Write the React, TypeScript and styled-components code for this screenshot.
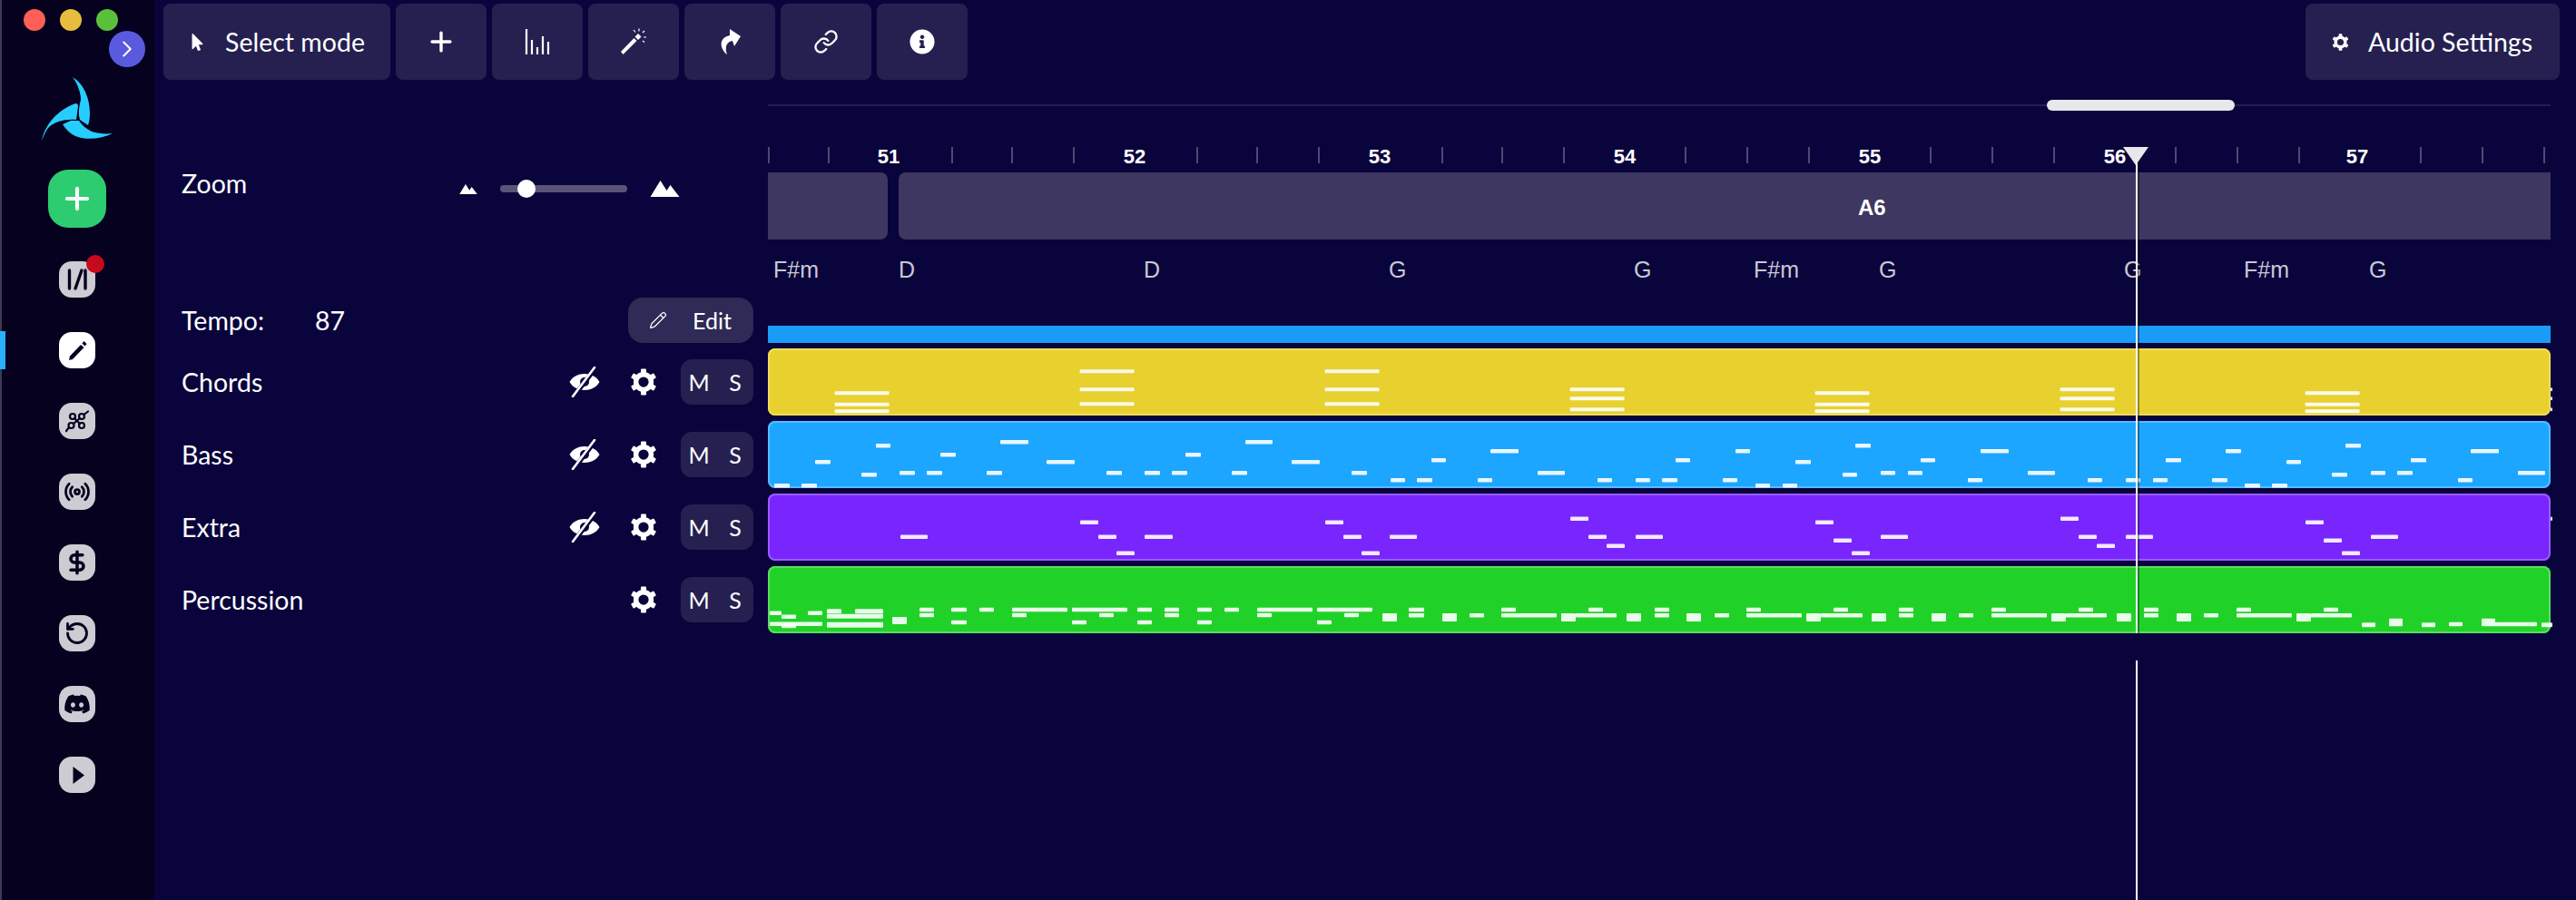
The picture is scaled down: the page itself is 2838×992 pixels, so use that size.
import styled, { createGlobalStyle } from 'styled-components'
import { ChevronRight, DollarSign, Link, Pencil, Plus, Radio, RotateCcw } from 'lucide-react'
import { FaDiscord, FaInfoCircle, FaMousePointer } from 'react-icons/fa'

const TIMELINE_X = 846
const TIMELINE_WIDTH = 1964

// [x start, x end, y centre, height]; page coordinates, height defaults to 4.5
type Note = [number, number, number, number?]

const GlobalStyle = createGlobalStyle`
    html, body {
        margin: 0;
        padding: 0;
        width: 2838px;
        height: 992px;
        overflow: hidden;
        background: #0a043c;
        font-family: 'Lato', 'Liberation Sans', sans-serif;
    }
`

const chordShapes = [
    [433.3, 445.7, 453.3],
    [409.3, 429.3, 445.3],
    [409.3, 429.3, 445.3],
    [429.3, 439.3, 451.3],
    [433.3, 445.7, 453.3],
    [429.3, 439.3, 451.3],
    [433.3, 445.7, 453.3],
]
const chordNotes: Note[] = chordShapes.flatMap((ys, i) =>
    ys.map((y): Note => [919.6 + i * 270, 979.6 + i * 270, y, 4])
)
chordNotes.push([2810, 2812, 429.3, 4], [2810, 2812, 439.3, 4], [2810, 2812, 451.3, 4])

const bassNotes: Note[] = [
    [853, 870, 535.3], [883, 900, 535.3], [898, 915, 509.3], [949, 966, 523.3], [965, 981, 491.3],
    [991, 1008, 521.3], [1021, 1038, 521.3], [1036, 1053, 501.3], [1087, 1104, 521.3], [1102, 1133, 487.3],
    [1153, 1184, 509.3], [1219, 1236, 521.3], [1261, 1278, 521.3], [1291, 1308, 521.3], [1306, 1323, 501.3],
    [1357, 1374, 521.3], [1372, 1402, 487.3], [1423, 1454, 509.3], [1489, 1506, 521.3], [1532, 1548, 529.3],
    [1561, 1578, 529.3], [1577, 1593, 507.3], [1628, 1644, 529.3], [1642, 1673, 497.3], [1694, 1724, 521.3],
    [1760, 1776, 529.3], [1802, 1818, 529.3], [1831, 1848, 529.3], [1846, 1862, 507.3], [1898, 1914, 529.3],
    [1912, 1928, 497.3], [1934, 1950, 535.3], [1964, 1980, 535.3], [1978, 1995, 509.3], [2030, 2046, 523.3],
    [2044, 2061, 491.3], [2072, 2088, 521.3], [2102, 2118, 521.3], [2116, 2132, 507.3], [2168, 2184, 529.3],
    [2182, 2213, 497.3], [2234, 2264, 521.3], [2300, 2316, 529.3], [2342, 2358, 529.3], [2372, 2388, 529.3],
    [2386, 2403, 507.3], [2437, 2454, 529.3], [2452, 2469, 497.3], [2473, 2490, 535.3], [2503, 2520, 535.3],
    [2519, 2535, 509.3], [2569, 2586, 523.3], [2584, 2601, 491.3], [2612, 2628, 521.3], [2641, 2658, 521.3],
    [2656, 2673, 507.3], [2708, 2724, 529.3], [2722, 2753, 497.3], [2774, 2804, 521.3],
]

const extraNotes: Note[] = [
    [992, 1022, 591.7], [1190, 1210, 575.7], [1210, 1230, 591.7], [1230, 1250, 609.7], [1261, 1292, 591.7],
    [1460, 1480, 575.7], [1480, 1500, 591.7], [1500, 1520, 609.7], [1531, 1561, 591.7], [1730, 1750, 571.7],
    [1750, 1770, 591.7], [1770, 1790, 601.7], [1802, 1832, 591.7], [2000, 2020, 575.7], [2020, 2040, 595.7],
    [2040, 2060, 609.7], [2072, 2102, 591.7], [2270, 2290, 571.7], [2290, 2310, 591.7], [2310, 2330, 601.7],
    [2342, 2372, 591.7], [2540, 2560, 575.7], [2560, 2580, 595.7], [2580, 2600, 609.7], [2612, 2642, 591.7],
    [2810, 2812, 571.7],
]

const percussionNotes: Note[] = [
    [848, 861, 675.7], [861, 877, 679.7], [890, 906, 675.7], [848, 906, 687.7], [861, 877, 690],
    [911, 927, 673.7, 5], [942, 973, 673.7, 5], [911, 973, 679.3, 5], [911, 973, 688.7, 6], [983, 999, 684, 8],
    [1013, 1029, 672], [1013, 1029, 678], [1048, 1065, 672], [1048, 1065, 686], [1079, 1095, 672],
    [1115, 1176, 672], [1115, 1131, 678], [1181, 1242, 672], [1211, 1227, 678], [1181, 1197, 686],
    [1253, 1269, 672], [1253, 1269, 686], [1283, 1299, 672], [1283, 1299, 678], [1319, 1335, 672],
    [1319, 1335, 686], [1349, 1365, 672], [1385, 1446, 672], [1385, 1401, 678], [1451, 1512, 672],
    [1481, 1497, 678], [1451, 1467, 686], [1523, 1539, 680.5, 9], [1552, 1569, 672], [1552, 1569, 678.3],
    [1589, 1605, 680.5, 9], [1619, 1635, 678.3], [1654, 1670, 672], [1654, 1715, 678.3], [1720, 1736, 680.5, 9],
    [1736, 1781, 678.3], [1750, 1766, 672], [1792, 1808, 680.5, 9], [1823, 1839, 672], [1823, 1839, 678.3],
    [1858, 1874, 680.5, 9], [1889, 1905, 678.3], [1924, 1940, 672], [1924, 1985, 678.3], [1990, 2006, 680.5, 9],
    [2006, 2052, 678.3], [2020, 2036, 672], [2062, 2078, 680.5, 9], [2092, 2108, 672], [2092, 2108, 678.3],
    [2128, 2144, 680.5, 9], [2158, 2174, 678.3], [2194, 2210, 672], [2194, 2255, 678.3], [2260, 2276, 680.5, 9],
    [2276, 2321, 678.3], [2290, 2306, 672], [2332, 2348, 680.5, 9], [2362, 2378, 672], [2362, 2378, 678.3],
    [2398, 2414, 680.5, 9], [2428, 2444, 678.3], [2464, 2480, 672], [2464, 2525, 678.3], [2530, 2546, 680.5, 9],
    [2546, 2591, 678.3], [2560, 2576, 672], [2602, 2617, 688.7, 5], [2632, 2647, 684], [2632, 2647, 688],
    [2668, 2683, 688.7, 5], [2698, 2713, 688], [2734, 2749, 684], [2734, 2795, 688], [2800, 2812, 688.7, 5],
]

const tracks = [
    { name: 'Chords', hideable: true, top: 384, fill: '#e8d02f', edge: '#f0dc5c', notes: chordNotes },
    { name: 'Bass', hideable: true, top: 464, fill: '#1ca6ff', edge: '#55bbff', notes: bassNotes },
    { name: 'Extra', hideable: true, top: 544, fill: '#7925fe', edge: '#9a5cff', notes: extraNotes },
    { name: 'Percussion', hideable: false, top: 624, fill: '#20d228', edge: '#5cdc62', notes: percussionNotes },
]

const ticks = [
    846, 912, 1048, 1114, 1182, 1318, 1384, 1452, 1588, 1654, 1722, 1856, 1924, 1992, 2126, 2194, 2262, 2396, 2464,
    2532, 2666, 2734, 2802,
]
const bars = [
    { label: 51, x: 979 },
    { label: 52, x: 1250 },
    { label: 53, x: 1520 },
    { label: 54, x: 1790 },
    { label: 55, x: 2060 },
    { label: 56, x: 2330 },
    { label: 57, x: 2597 },
]
const chords = [
    { label: 'F#m', x: 852 },
    { label: 'D', x: 990 },
    { label: 'D', x: 1260 },
    { label: 'G', x: 1530 },
    { label: 'G', x: 1800 },
    { label: 'F#m', x: 1932 },
    { label: 'G', x: 2070 },
    { label: 'G', x: 2340 },
    { label: 'F#m', x: 2472 },
    { label: 'G', x: 2610 },
]

const GearIcon = ({ size }: { size: number }) => (
    <svg width={size} height={size} viewBox="0 0 24 24" fill="#fff">
        <circle cx="12" cy="12" r="6.7" fill="none" stroke="#fff" strokeWidth="4.4" />
        {[0, 60, 120, 180, 240, 300].map((a) => (
            <rect key={a} x="9.6" y="0.4" width="4.8" height="5" rx="0.8" transform={`rotate(${a} 12 12)`} />
        ))}
    </svg>
)

const EyeOffIcon = () => (
    <svg width="34" height="34" viewBox="0 0 34 34">
        <path d="M0.5 17C7 5 27 5 33.5 17C27 29 7 29 0.5 17Z" fill="#fff" />
        <circle cx="17" cy="17" r="5" fill="#0a043c" />
        <path d="M5 33L29 2" stroke="#0a043c" strokeWidth="5" />
        <path d="M4 33L28 1" stroke="#fff" strokeWidth="2.6" strokeLinecap="round" />
    </svg>
)

const MountainIcon = ({ width, height }: { width: number; height: number }) => (
    <svg width={width} height={height} viewBox="0 0 32 18" fill="#fff">
        <path d="M0 18L11 0L18 11L22 5L32 18Z" />
    </svg>
)

const BarsIcon = () => (
    <svg width="28" height="30" viewBox="0 0 28 30" stroke="#fff" strokeWidth="2.2">
        <path d="M2 1V29M8 13V29M14 21V29M20 9V29M26 15V29" />
    </svg>
)

const WandIcon = () => (
    <svg width="30" height="30" viewBox="0 0 30 30" fill="#fff">
        <path d="M1 26L15.5 11L18.5 14L3.5 29Z" />
        <path d="M20 6L23.5 9.5L20 13L16.5 9.5Z" />
        <path d="M21 0.5V3.5M27 3L25 5M29 10H26M27 15.5L25 14M15 2L17 4.5" stroke="#fff" strokeWidth="1.2" />
    </svg>
)

const ShareIcon = () => (
    <svg width="24" height="30" viewBox="0 0 24 28" fill="#fff">
        <path d="M12 0L24 8L17 19L15 13C9 14 6 19 9 28C1 22 -1 10 12 7Z" />
    </svg>
)

const LibraryGlyph = () => (
    <svg width="40" height="40" viewBox="0 0 40 40" fill="none" stroke="#05011f" strokeWidth="3.4" strokeLinecap="round">
        <path d="M11.5 10V30M25 10L18 30M29 10V30" />
    </svg>
)

const PencilGlyph = () => (
    <svg width="40" height="40" viewBox="0 0 40 40" fill="#05011f">
        <path d="M12 26.5L24 14L27.5 17L15 30L11 31Z" />
        <path d="M25.5 12.5L27.5 10L30.5 13L28.5 15.5Z" />
    </svg>
)

const RouteGlyph = () => (
    <svg width="40" height="40" viewBox="0 0 40 40" fill="none" stroke="#05011f" strokeWidth="2.2" strokeLinecap="round">
        <circle cx="15" cy="15" r="3" />
        <circle cx="25" cy="15" r="3" />
        <circle cx="13.5" cy="25" r="3" />
        <circle cx="25" cy="25" r="3" />
        <path d="M17 17L23 23M23 17L16 23M27.5 13L32 9.5M11 27L8 31" />
    </svg>
)

const PlayGlyph = () => (
    <svg width="40" height="40" viewBox="0 0 40 40" fill="#05011f">
        <path d="M15.5 11L28 20.5L15.5 30Z" />
    </svg>
)

const Logo = () => (
    <svg width="78" height="70" viewBox="46 85 78 70" fill="#27cdff">
        <path d="M80 85C92 92 99 108 99 125C99 131 98 135 97 138L88 132C86 125 87 118 89 110C89 103 86 93 80 85Z" />
        <path d="M46 155C49 140 60 123 83 114C85 114 86 115 86 117L84 132C72 131 60 134 53 141C50 145 48 150 46 155Z" />
        <path d="M124 147C112 153 96 155 83 150C77 147 72 142 69 137L78 133H87C90 138 95 142 101 145C108 147 116 148 124 147Z" />
    </svg>
)

const NoteRoll = ({ notes, top }: { notes: Note[]; top: number }) => (
    <RollSvg width={TIMELINE_WIDTH} height={74} viewBox={`${TIMELINE_X} ${top} ${TIMELINE_WIDTH} 74`}>
        {notes.map(([x1, x2, y, h = 4.5], i) => (
            <rect key={i} x={x1} y={y - h / 2} width={x2 - x1} height={h} rx="1" />
        ))}
    </RollSvg>
)

const App = () => (
    <Page>
        <GlobalStyle />
        <Sidebar>
            <TrafficLights>
                <TrafficDot $color="#ff5f57" />
                <TrafficDot $color="#e6bd3d" />
                <TrafficDot $color="#5ac03c" />
            </TrafficLights>
            <ToggleButton>
                <ChevronRight size={30} color="#fff" strokeWidth={1.6} />
            </ToggleButton>
            <LogoSlot>
                <Logo />
            </LogoSlot>
            <CreateButton>
                <Plus size={38} color="#fff" strokeWidth={2.6} />
            </CreateButton>
            <NavList>
                <NavIcon>
                    <LibraryGlyph />
                    <NavBadge />
                </NavIcon>
                <NavIcon $active>
                    <ActiveMark />
                    <PencilGlyph />
                </NavIcon>
                <NavIcon>
                    <RouteGlyph />
                </NavIcon>
                <NavIcon>
                    <Radio size={30} color="#05011f" strokeWidth={2.2} />
                </NavIcon>
                <NavIcon>
                    <DollarSign size={28} color="#05011f" strokeWidth={3} />
                </NavIcon>
                <NavIcon>
                    <RotateCcw size={28} color="#05011f" strokeWidth={2.4} />
                </NavIcon>
                <NavIcon>
                    <FaDiscord size={30} color="#05011f" />
                </NavIcon>
                <NavIcon>
                    <PlayGlyph />
                </NavIcon>
            </NavList>
        </Sidebar>
        <Main>
            <Toolbar>
                <ToolGroup>
                    <ToolButton $wide>
                        <FaMousePointer size={19} />
                        Select mode
                    </ToolButton>
                    <ToolButton>
                        <Plus size={34} strokeWidth={2.4} />
                    </ToolButton>
                    <ToolButton>
                        <BarsIcon />
                    </ToolButton>
                    <ToolButton>
                        <WandIcon />
                    </ToolButton>
                    <ToolButton>
                        <ShareIcon />
                    </ToolButton>
                    <ToolButton>
                        <Link size={28} strokeWidth={2} />
                    </ToolButton>
                    <ToolButton>
                        <FaInfoCircle size={28} />
                    </ToolButton>
                </ToolGroup>
                <AudioButton>
                    <GearIcon size={19} />
                    Audio Settings
                </AudioButton>
            </Toolbar>
            <Workspace>
                <LeftPanel>
                    <ZoomRow>
                        <PanelLabel>Zoom</PanelLabel>
                        <ZoomControls>
                            <MountainIcon width={20} height={11} />
                            <SliderTrack>
                                <SliderThumb />
                            </SliderTrack>
                            <MountainIcon width={33} height={18} />
                        </ZoomControls>
                    </ZoomRow>
                    <TempoRow>
                        <TempoLabel>Tempo:</TempoLabel>
                        <PanelLabel>87</PanelLabel>
                        <EditButton>
                            <Pencil size={20} strokeWidth={1.5} />
                            Edit
                        </EditButton>
                    </TempoRow>
                    <TrackList>
                        {tracks.map((track) => (
                            <TrackRow key={track.name}>
                                <PanelLabel>{track.name}</PanelLabel>
                                <TrackActions>
                                    {track.hideable && <EyeOffIcon />}
                                    <GearSlot>
                                        <GearIcon size={30} />
                                    </GearSlot>
                                    <MuteSolo>
                                        <span>M</span>
                                        <span>S</span>
                                    </MuteSolo>
                                </TrackActions>
                            </TrackRow>
                        ))}
                    </TrackList>
                </LeftPanel>
                <Timeline>
                    <ScrollArea>
                        <ScrollThumb />
                    </ScrollArea>
                    <Ruler>
                        {ticks.map((x) => (
                            <Tick key={x} style={{ left: x - TIMELINE_X }} />
                        ))}
                        {bars.map((bar) => (
                            <BarNumber key={bar.label} style={{ left: bar.x - TIMELINE_X }}>
                                {bar.label}
                            </BarNumber>
                        ))}
                    </Ruler>
                    <SectionRow>
                        <SectionBlock $width="132px" $radius="0 8px 8px 0" $indent="0" />
                        <SectionBlock $width="1820px" $radius="8px 0 0 8px" $indent="1057px">
                            <SectionName>A6</SectionName>
                        </SectionBlock>
                    </SectionRow>
                    <ChordLane>
                        {chords.map((chord) => (
                            <ChordName key={chord.x} style={{ left: chord.x - TIMELINE_X }}>
                                {chord.label}
                            </ChordName>
                        ))}
                    </ChordLane>
                    <LoopBar />
                    <TrackStack>
                        {tracks.map((track) => (
                            <TrackLane key={track.name} $fill={track.fill} $edge={track.edge}>
                                <NoteRoll notes={track.notes} top={track.top} />
                            </TrackLane>
                        ))}
                    </TrackStack>
                    <PlayheadHandle />
                    <PlayheadUpper />
                    <PlayheadLower />
                </Timeline>
            </Workspace>
        </Main>
    </Page>
)

const Page = styled.div`
    display: flex;
    width: 2838px;
    height: 992px;
    overflow: hidden;
    background: #0a043c;
    color: #fff;
`

const Sidebar = styled.nav`
    position: relative;
    box-sizing: border-box;
    width: 170px;
    height: 992px;
    flex-shrink: 0;
    display: flex;
    flex-direction: column;
    align-items: center;
    border-left: 2px solid #3d3a55;
    padding-right: 2px;
    background: #05011f;
`

const TrafficLights = styled.div`
    align-self: flex-start;
    display: flex;
    gap: 16px;
    margin: 10px 0 0 24px;
`

const TrafficDot = styled.span<{ $color: string }>`
    width: 24px;
    height: 24px;
    border-radius: 50%;
    background: ${(p) => p.$color};
`

const ToggleButton = styled.div`
    position: absolute;
    left: 118px;
    top: 34px;
    width: 40px;
    height: 40px;
    display: flex;
    align-items: center;
    justify-content: center;
    border-radius: 50%;
    background: #5a5adf;
`

const LogoSlot = styled.div`
    display: flex;
    margin-top: 51px;
`

const CreateButton = styled.div`
    width: 64px;
    height: 64px;
    margin-top: 32px;
    display: flex;
    align-items: center;
    justify-content: center;
    border-radius: 22px;
    background: #2ecc71;
`

const NavList = styled.div`
    display: flex;
    flex-direction: column;
    gap: 38px;
    margin-top: 37px;
`

const NavIcon = styled.div<{ $active?: boolean }>`
    position: relative;
    width: 40px;
    height: 40px;
    display: flex;
    align-items: center;
    justify-content: center;
    border-radius: 14px;
    background: ${(p) => (p.$active ? '#fff' : '#cdccd2')};
`

const NavBadge = styled.span`
    position: absolute;
    right: -10px;
    top: -7px;
    width: 20px;
    height: 20px;
    border-radius: 50%;
    background: #c60a1c;
`

const ActiveMark = styled.span`
    position: absolute;
    left: -65px;
    top: -1px;
    width: 6px;
    height: 42px;
    background: #2ab0ff;
`

const Main = styled.main`
    flex: 1;
    display: flex;
    flex-direction: column;
    min-width: 0;
`

const Toolbar = styled.header`
    display: flex;
    justify-content: space-between;
    height: 84px;
    padding: 4px 18px 0 10px;
`

const ToolGroup = styled.div`
    display: flex;
    gap: 6px;
`

const ToolButton = styled.div<{ $wide?: boolean }>`
    box-sizing: border-box;
    width: ${(p) => (p.$wide ? '250px' : '100px')};
    height: 84px;
    display: flex;
    align-items: center;
    justify-content: ${(p) => (p.$wide ? 'flex-start' : 'center')};
    gap: 21px;
    padding-left: ${(p) => (p.$wide ? '28px' : '0')};
    border-radius: 8px;
    background: #252050;
    font-size: 28.5px;
`

const AudioButton = styled.div`
    box-sizing: border-box;
    width: 280px;
    height: 84px;
    display: flex;
    align-items: center;
    gap: 21px;
    padding-left: 29px;
    border-radius: 8px;
    background: #252050;
    font-size: 28.5px;
`

const Workspace = styled.div`
    display: flex;
    flex: 1;
`

const LeftPanel = styled.aside`
    box-sizing: border-box;
    width: 676px;
    padding: 92px 16px 0 30px;
`

const PanelLabel = styled.div`
    font-size: 28.5px;
    line-height: 34px;
`

const ZoomRow = styled.div`
    display: flex;
    align-items: center;
    justify-content: space-between;
    height: 44px;
`

const ZoomControls = styled.div`
    display: flex;
    align-items: center;
    gap: 25px;
    margin: 12px 81px 0 0;
`

const SliderTrack = styled.div`
    position: relative;
    width: 140px;
    height: 8px;
    border-radius: 4px;
    background: #5a5478;
`

const SliderThumb = styled.span`
    position: absolute;
    left: 19px;
    top: -6px;
    width: 20px;
    height: 20px;
    border-radius: 50%;
    background: #fff;
`

const TempoRow = styled.div`
    display: flex;
    align-items: center;
    height: 50px;
    margin-top: 104px;
`

const TempoLabel = styled(PanelLabel)`
    width: 147px;
`

const EditButton = styled.div`
    box-sizing: border-box;
    width: 138px;
    height: 50px;
    margin-left: auto;
    display: flex;
    align-items: center;
    gap: 28px;
    padding-left: 23px;
    border-radius: 16px;
    background: #2f2a56;
    font-size: 25px;
`

const TrackList = styled.div`
    display: flex;
    flex-direction: column;
    gap: 30px;
    margin-top: 18px;
`

const TrackRow = styled.div`
    display: flex;
    align-items: center;
    justify-content: space-between;
    height: 50px;
`

const TrackActions = styled.div`
    display: flex;
    align-items: center;
    gap: 33px;
`

const GearSlot = styled.div`
    display: flex;
    margin-right: -7px;
`

const MuteSolo = styled.div`
    width: 80px;
    height: 50px;
    display: flex;
    align-items: center;
    border-radius: 12px;
    background: #252050;
    font-size: 25px;

    span {
        width: 40px;
        text-align: center;
    }
`

const Timeline = styled.section`
    position: relative;
    width: ${TIMELINE_WIDTH}px;
`

const ScrollArea = styled.div`
    position: relative;
    height: 2px;
    margin-top: 27px;
    background: #231d52;
`

const ScrollThumb = styled.div`
    position: absolute;
    left: 1409px;
    top: -5px;
    width: 207px;
    height: 12px;
    border-radius: 6px;
    background: #e8e8ec;
`

const Ruler = styled.div`
    position: relative;
    height: 28px;
    margin-top: 45px;
`

const Tick = styled.span`
    position: absolute;
    top: 0;
    width: 2px;
    height: 18px;
    background: #4e4972;
`

const BarNumber = styled.span`
    position: absolute;
    top: -2px;
    transform: translateX(-50%);
    font-family: 'Liberation Sans', Arial, sans-serif;
    font-weight: 700;
    font-size: 22px;
    line-height: 26px;
`

const SectionRow = styled.div`
    display: flex;
    gap: 12px;
    height: 74px;
`

const SectionBlock = styled.div<{ $width: string; $radius: string; $indent: string }>`
    box-sizing: border-box;
    width: ${(p) => p.$width};
    display: flex;
    align-items: center;
    padding: 3px 0 0 ${(p) => p.$indent};
    border-radius: ${(p) => p.$radius};
    background: #3e3762;
`

const SectionName = styled.span`
    font-family: 'Liberation Sans', Arial, sans-serif;
    font-weight: 700;
    font-size: 24px;
`

const ChordLane = styled.div`
    position: relative;
    height: 95px;
`

const ChordName = styled.span`
    position: absolute;
    top: 18px;
    font-family: 'Liberation Sans', Arial, sans-serif;
    font-size: 25px;
    line-height: 30px;
    color: #c9c8d4;
`

const LoopBar = styled.div`
    height: 19px;
    background: #1b9bf8;
`

const TrackStack = styled.div`
    display: flex;
    flex-direction: column;
    gap: 6px;
    margin-top: 6px;
`

const TrackLane = styled.div<{ $fill: string; $edge: string }>`
    position: relative;
    height: 74px;
    border-radius: 8px;
    background: ${(p) => p.$fill};
    box-shadow: inset 0 0 0 2px ${(p) => p.$edge};
`

const RollSvg = styled.svg`
    position: absolute;
    left: 0;
    top: 0;
    overflow: visible;
    filter: blur(0.4px);

    rect {
        fill: rgba(255, 255, 255, 0.9);
    }
`

const PlayheadHandle = styled.div`
    position: absolute;
    left: 1493px;
    top: 74px;
    width: 0;
    height: 0;
    border-left: 14px solid transparent;
    border-right: 14px solid transparent;
    border-top: 20px solid #e8e8ec;
`

const PlayheadUpper = styled.div`
    position: absolute;
    left: 1507px;
    top: 90px;
    width: 2px;
    height: 520px;
    background: #fff;
    box-shadow: 2px 0 0 rgba(0, 0, 0, 0.35);
`

const PlayheadLower = styled.div`
    position: absolute;
    left: 1507px;
    top: 640px;
    width: 2px;
    height: 264px;
    background: #fff;
`

export default App
